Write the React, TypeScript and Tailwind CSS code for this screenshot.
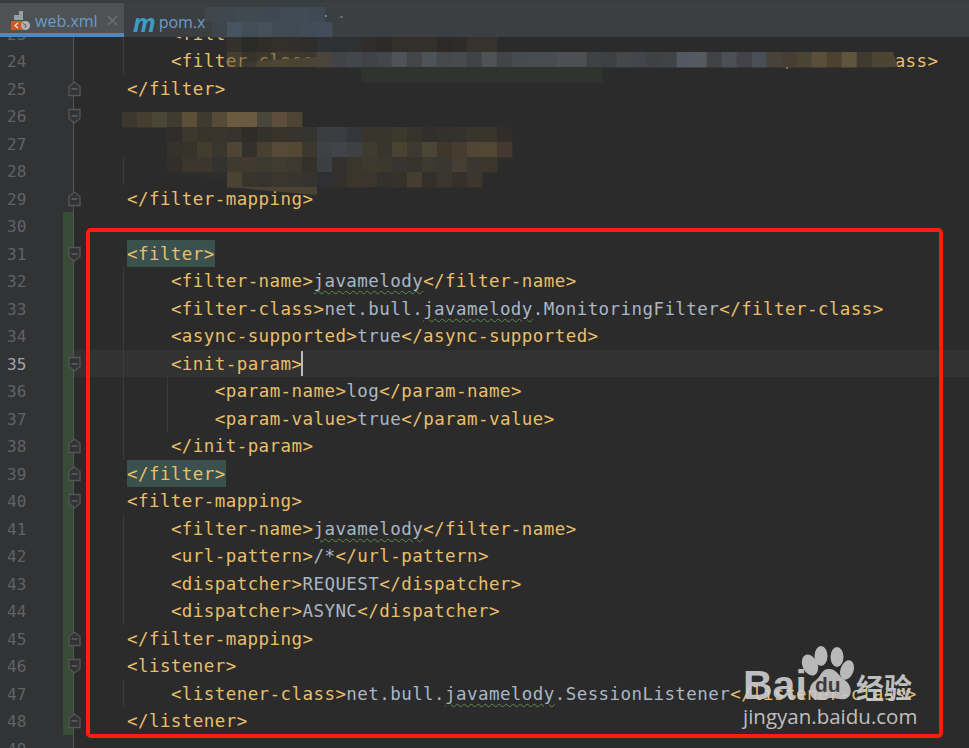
const TAG = 'text-[#e8bf6a]';

type Line = {
  n: number;
  parts?: [string, 'tag' | 'text' | 'squiggle' | 'hl'][];
  indent?: number;
  guides?: number[];
  fold?: 'start' | 'end';
  changed?: boolean;
  caret?: boolean;
};

const lines: Line[] = [
  { n: 23, indent: 1, guides: [0], parts: [['<filter-name>', 'tag']] },
  { n: 24, indent: 1, guides: [0], parts: [['<filter-class>\u00a0\u00a0\u00a0\u00a0\u00a0\u00a0\u00a0\u00a0\u00a0\u00a0\u00a0\u00a0\u00a0\u00a0\u00a0\u00a0\u00a0\u00a0\u00a0\u00a0\u00a0\u00a0\u00a0\u00a0\u00a0\u00a0\u00a0\u00a0\u00a0\u00a0\u00a0\u00a0\u00a0\u00a0\u00a0\u00a0\u00a0\u00a0\u00a0\u00a0\u00a0</filter-class>', 'tag']] },
  { n: 25, fold: 'end', parts: [['</filter>', 'tag']] },
  { n: 26, fold: 'start' },
  { n: 27 },
  { n: 28, guides: [0] },
  { n: 29, fold: 'end', parts: [['</filter-mapping>', 'tag']] },
  { n: 30, changed: true },
  { n: 31, changed: true, fold: 'start', parts: [['<filter>', 'hl']] },
  { n: 32, changed: true, indent: 1, guides: [0], parts: [['<filter-name>', 'tag'], ['javamelody', 'squiggle'], ['</filter-name>', 'tag']] },
  { n: 33, changed: true, indent: 1, guides: [0], parts: [['<filter-class>', 'tag'], ['net.bull.', 'text'], ['javamelody', 'squiggle'], ['.MonitoringFilter', 'text'], ['</filter-class>', 'tag']] },
  { n: 34, changed: true, indent: 1, guides: [0], parts: [['<async-supported>', 'tag'], ['true', 'text'], ['</async-supported>', 'tag']] },
  { n: 35, changed: true, indent: 1, guides: [0], fold: 'start', caret: true, parts: [['<init-param>', 'tag']] },
  { n: 36, changed: true, indent: 2, guides: [0, 1], parts: [['<param-name>', 'tag'], ['log', 'text'], ['</param-name>', 'tag']] },
  { n: 37, changed: true, indent: 2, guides: [0, 1], parts: [['<param-value>', 'tag'], ['true', 'text'], ['</param-value>', 'tag']] },
  { n: 38, changed: true, indent: 1, guides: [0], fold: 'end', parts: [['</init-param>', 'tag']] },
  { n: 39, changed: true, fold: 'end', parts: [['</filter>', 'hl']] },
  { n: 40, changed: true, fold: 'start', parts: [['<filter-mapping>', 'tag']] },
  { n: 41, changed: true, indent: 1, guides: [0], parts: [['<filter-name>', 'tag'], ['javamelody', 'squiggle'], ['</filter-name>', 'tag']] },
  { n: 42, changed: true, indent: 1, guides: [0], parts: [['<url-pattern>', 'tag'], ['/*', 'text'], ['</url-pattern>', 'tag']] },
  { n: 43, changed: true, indent: 1, guides: [0], parts: [['<dispatcher>', 'tag'], ['REQUEST', 'text'], ['</dispatcher>', 'tag']] },
  { n: 44, changed: true, indent: 1, guides: [0], parts: [['<dispatcher>', 'tag'], ['ASYNC', 'text'], ['</dispatcher>', 'tag']] },
  { n: 45, changed: true, fold: 'end', parts: [['</filter-mapping>', 'tag']] },
  { n: 46, changed: true, fold: 'start', parts: [['<listener>', 'tag']] },
  { n: 47, changed: true, indent: 1, guides: [0], parts: [['<listener-class>', 'tag'], ['net.bull.', 'text'], ['javamelody', 'squiggle'], ['.SessionListener', 'text'], ['</listener-class>', 'tag']] },
  { n: 48, changed: true, fold: 'end', parts: [['</listener>', 'tag']] },
  { n: 49 },
];

// pixelated blur over the hidden lines: [x of first cell, y, cell colours]
const mosaicRows: [number, number, string[]][] = [
  [205, 7, ['#3f464c', '#3f474e', '#404850', '#404850', '#3f4850', '#404a52', '#414b54', '#3f4952']],
  [212, 22, ['#3f464b', '#455460', '#424e57', '#455059', '#404a53', '#3f4a55', '#404c58', '#414d58']],
  [226.7, 37, ['#34302a', '#2a2a29', '#302d29', '#332f2a', '#322f2a', '#2e2d2b', '#2f3235', '#2e3131', '#2e3131', '#302d2a', '#2b2a28', '#332f2a', '#332f2a', '#332f2a', '#2b2a28', '#2e2c2a', '#37322c', '#37322c']],
  [316.7, 52, ['#4a453a', '#424347', '#43474b', '#3f4347', '#44464b', '#4f5357', '#444547', '#4b5258', '#47484b', '#484a4e', '#3f4348', '#4f5356', '#434448', '#474a4f', '#484c50', '#484c50', '#4e4f53', '#4e4f53', '#3f4143', '#3e4144', '#464748', '#42454a', '#3f4143', '#414446', '#535863', '#565a5f', '#414244', '#4c5056', '#434347', '#494e57', '#47423a', '#473f33', '#4a4435', '#5b4f3a', '#4b4330', '#5f543c', '#3f392f', '#4b4433']],
  [361.7, 67, Array(16).fill('#2f342f')],
  [122, 112, ['#3d382f', '#453d30', '#4c4636', '#413b2f', '#5b4f38', '#3f392f', '#554b37', '#6a5a3e', '#6a5a3e', '#48463a', '#5c4e3a', '#4d4534']],
  [167, 127, ['#2f2e2c', '#3d382e', '#38342c', '#38352d', '#37332c', '#2e2b28', '#33312c', '#38342c', '#36342c', '#33332f', '#3a3c40', '#3a3c40', '#33363b', '#38352d', '#38352d', '#3b382c', '#36332d', '#312f2b', '#33312d', '#34322c', '#38352c', '#38352d', '#302e2b']],
  [167, 142, ['#35322b', '#36332b', '#423c2f', '#39362e', '#4e4534', '#33312c', '#473f30', '#57493a', '#534832', '#3a382f', '#3f4145', '#42444a', '#3e4043', '#3f3b2e', '#37352e', '#4a4230', '#3d3830', '#4a4535', '#3f3729', '#463d30', '#4f4634', '#514733', '#45392f']],
  [167, 157, ['#322f2b', '#3a362c', '#3c372e', '#323230', '#3f3a30', '#423a2f', '#3c3a30', '#413b30', '#3e3930', '#333129', '#3b3e43', '#32312e', '#393729', '#3c3a2d', '#3c382d', '#373431', '#36332d', '#3c3a30', '#3a3732', '#463e32', '#3c3630', '#3a362c']],
  [227, 172, ['#4a4232', '#39352d', '#36332e', '#3a352d', '#37352e', '#343331', '#303033', '#33312e', '#3a362c', '#3b352d', '#33312d', '#35322c', '#453d2f', '#33302b', '#3a352e', '#34302c', '#3c372d']],
];

function Mosaic() {
  return (
    <svg className="absolute left-0 top-0" width="969" height="200">
      {mosaicRows.map(([x, y, colours]) =>
        colours.map((c, i) => <rect key={`${y}-${i}`} x={x + i * 15} y={y} width="15.5" height="15.5" fill={c} />),
      )}
      {/* tan cells that the code still shows through */}
      {['#5a4d35', '#3f3a2f', '#4a4232', '#4f4635', '#4a4232', '#4b4436'].map((c, i) => (
        <g key={c + i}>
          <rect x={226.7 + i * 15} y="52" width="15.5" height="15" fill={c} opacity="0.55" />
          {i > 0 && <polygon points={`${226.7 + i * 15},${63 - i} ${242.2 + i * 15},${62 - i} ${242.2 + i * 15},67 ${226.7 + i * 15},67`} fill={c} />}
        </g>
      ))}
      <polygon points="886.7,52 893,52 898,67 886.7,67" fill="#4d4534" />
      <polygon points="167,172 227,172 227,180" fill="#2f2e2c" />
      <polygon points="227,187 317,187 317,195" fill="#4a4232" />
      <rect x="325" y="15" width="2" height="2" fill="#4f86b5" />
      <rect x="340" y="16" width="3" height="2" fill="#63676a" />
    </svg>
  );
}

function FoldMarker({ kind }: { kind: 'start' | 'end' }) {
  return (
    <svg className="absolute left-[-6px] top-[6px]" width="13" height="16" viewBox="0 0 13 16">
      {kind === 'start' ? (
        <path d="M1 1.5H12V10.5L6.5 15L1 10.5Z" fill="#313335" stroke="#565656" strokeWidth="1.3" />
      ) : (
        <path d="M1 14.5H12V5.5L6.5 1L1 5.5Z" fill="#313335" stroke="#565656" strokeWidth="1.3" />
      )}
      <path d="M3.5 8H9.5" stroke="#777" />
    </svg>
  );
}

function Part({ text, kind }: { text: string; kind: string }) {
  if (kind === 'hl')
    return (
      <span className={`inline-block bg-[#3b514d] ${TAG}`}>
        <span className="relative top-px">{text}</span>
      </span>
    );
  if (kind === 'tag') return <span className={`relative top-px ${TAG}`}>{text}</span>;
  if (kind === 'squiggle')
    return <span className="relative top-px text-[#a9b7c6] underline decoration-wavy decoration-[#5c8a4e] decoration-1 underline-offset-[3px]">{text}</span>;
  return <span className="relative top-px text-[#a9b7c6]">{text}</span>;
}

function Row({ line }: { line: Line }) {
  const active = line.n === 35;
  return (
    <div className="flex h-[27.5px] leading-[27.5px]">
      <div className="flex w-[74px] shrink-0 border-r border-[#555555] bg-[#313335]">
        <div className={`relative top-px w-[63px] pl-[7px] text-[16px] ${active ? 'text-[#a4a3a3]' : 'text-[#606366]'}`}>{line.n}</div>
        <div className={`w-[10px] ${line.changed ? 'bg-[#384c38]' : ''}`} />
      </div>
      <div className={`relative flex-1 pl-[53px] text-[17.5px] tracking-[0.43px] whitespace-pre ${active ? 'bg-[#323232]' : ''}`}>
        {line.fold && <FoldMarker kind={line.fold} />}
        {line.guides?.map((g) => (
          <div key={g} className={`absolute top-0 bottom-0 w-px bg-[#3b3b3b] ${g === 0 ? 'left-[49px]' : 'left-[93px]'}`} />
        ))}
        <div className={line.indent === 2 ? 'ml-[87.8px]' : line.indent === 1 ? 'ml-[43.9px]' : ''}>
          {line.parts?.map(([text, kind], i) => <Part key={i} text={text} kind={kind} />)}
          {line.caret && <span className="mt-px ml-[-1px] inline-block h-[25px] w-[2px] bg-[#bbbbbb] align-top" />}
        </div>
      </div>
    </div>
  );
}

function Watermark() {
  return (
    <div className="absolute left-[743px] top-[645px] h-[84px] w-[176px] text-[#cfcfcf] opacity-90">
      <div className="absolute left-0 top-[16px] font-['Liberation_Sans',sans-serif] text-[41px] leading-[48px] font-bold">Bai</div>
      <svg className="absolute left-[54px] top-0" width="60" height="56" viewBox="0 0 60 56">
        <ellipse cx="13" cy="20" rx="7.5" ry="11" transform="rotate(-25 13 20)" fill="#c9c9c9" />
        <ellipse cx="24" cy="11" rx="6.5" ry="10" fill="#c9c9c9" />
        <ellipse cx="40" cy="12" rx="6.5" ry="10" fill="#c9c9c9" />
        <ellipse cx="50" cy="25" rx="6.5" ry="10" transform="rotate(20 50 25)" fill="#c9c9c9" />
        <path d="M32 24C24 24 24 32 18 36C10 41 11 55 22 55C28 55 30 53 35 53C40 53 43 55 48 54C56 52 55 41 49 36C42 32 40 24 32 24Z" fill="#c9c9c9" />
      </svg>
      <div className="absolute left-[72px] top-[28px] font-['Liberation_Sans',sans-serif] text-[21px] leading-[24px] font-bold text-[#3c3c3c]">du</div>
      <div className="absolute left-[113px] top-[26px] font-['Noto_Sans_CJK_SC',sans-serif] text-[28px] leading-[32px] font-bold">经验</div>
      <div className="absolute left-0 top-[58px] font-['Open_Sans',sans-serif] text-[20.5px] leading-[26px] whitespace-nowrap">jingyan.baidu.com</div>
    </div>
  );
}

export default function App() {
  return (
    <div className="relative h-[748px] w-[969px] overflow-hidden bg-[#2b2b2b] font-['DejaVu_Sans_Mono',monospace]">
      {/* Tabs */}
      <div className="h-[37px] border-t-[3px] border-t-[#3a3d3f] bg-[#3c3f41] font-['Open_Sans',sans-serif] text-[16px]">
        <div className="flex h-[34px]">
          <div className="flex w-[124px] items-center border-b-[4px] border-[#4a88c7] bg-[#4e5254] pt-[5px]">
            <svg className="ml-[10px] shrink-0" width="21" height="21" viewBox="0 0 21 21">
              <path d="M4 1H13V10H4Z" fill="#9a9da0" />
              <path d="M4 1H9V5H4Z" fill="#4e5254" />
              <rect x="1" y="11" width="13" height="9" fill="#c75b21" />
              <path d="M8 13L5 15.5L8 18" fill="none" stroke="#f3e3d8" strokeWidth="1.3" />
              <circle cx="15.5" cy="15.5" r="4.5" fill="#afb2b4" />
              <path d="M13 13.5L16 15L15 18" fill="none" stroke="#5a5d5f" />
            </svg>
            <span className="ml-[4px] text-[#6a9cc9]">web.xml</span>
            <svg className="ml-[9px]" width="11" height="11" viewBox="0 0 11 11">
              <path d="M1 1L10 10M10 1L1 10" stroke="#6e7274" strokeWidth="1.2" />
            </svg>
          </div>
          <div className="flex items-center pt-[4px]">
            <span className="ml-[9px] font-['Open_Sans',sans-serif] text-[25px] leading-[24px] font-bold text-[#3d9bc6] italic">m</span>
            <span className="ml-[3px] text-[#6a9cc9]">pom.x</span>
          </div>
        </div>
      </div>

      {/* Editor */}
      <div className="h-[711px] overflow-hidden">
        <div className="mt-[-17.25px]">
          {lines.map((line) => (
            <Row key={line.n} line={line} />
          ))}
        </div>
      </div>

      <Mosaic />

      {/* Annotation over the screenshot */}
      <div className="absolute left-[86px] top-[228px] h-[510px] w-[857px] rounded-[5px] border-4 border-[#ff1e0e]" />
      <Watermark />
    </div>
  );
}
